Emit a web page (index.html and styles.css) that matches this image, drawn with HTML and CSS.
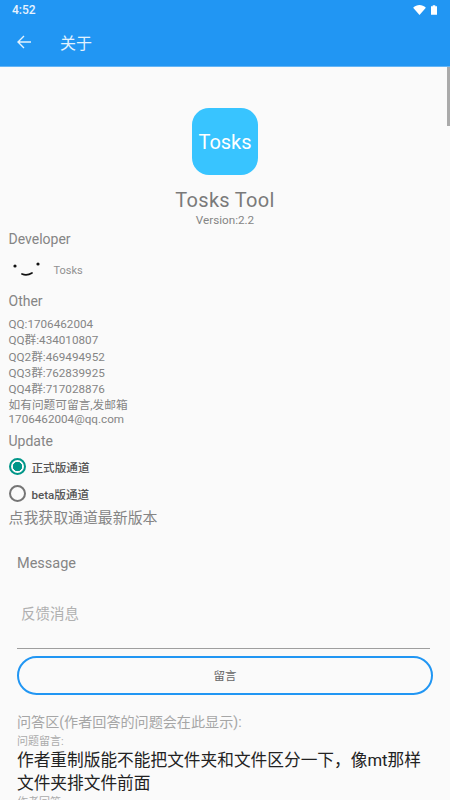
FILE: index.html
```html
<!DOCTYPE html>
<html lang="zh">
<head>
<meta charset="utf-8">
<title>关于</title>
<link rel="stylesheet" href="styles.css">
</head>
<body>
<div class="app">
  <header class="appbar">
    <div class="status">
      <span class="time">4:52</span>
      <span class="status-icons">
        <svg class="wifi" viewBox="0 0 14 11"><path d="M0 3 C4 -1 10 -1 14 3 L7 11 Z" fill="#fff"/></svg>
        <svg class="batt" viewBox="0 0 7 11"><path d="M2 0h3v1h2v10H0V1h2z" fill="#fff"/></svg>
      </span>
    </div>
    <div class="toolbar">
      <svg class="back" viewBox="0 0 16 16"><path d="M15 8H2M8 2 2 8l6 6" fill="none" stroke="#e3f2fd" stroke-width="1.4"/></svg>
      <span class="title">关于</span>
    </div>
  </header>
  <div class="scrollbar"></div>
  <main class="content">
    <section class="hero">
      <div class="logo">Tosks</div>
      <div class="name">Tosks Tool</div>
      <div class="version">Version:2.2</div>
    </section>
    <section class="info">
      <h2 class="label dev-label">Developer</h2>
      <div class="dev">
        <svg class="avatar" viewBox="0 0 32 20">
          <circle cx="4" cy="6" r="1.6" fill="#111"/>
          <circle cx="27" cy="4" r="1.6" fill="#111"/>
          <path d="M11 14 Q16 16 21 13" fill="none" stroke="#111" stroke-width="1.7" stroke-linecap="round"/>
        </svg>
        <span class="dev-name">Tosks</span>
      </div>
      <h2 class="label other">Other</h2>
      <div class="lines">
        <div>QQ:1706462004</div>
        <div>QQ群:434010807</div>
        <div>QQ2群:469494952</div>
        <div>QQ3群:762839925</div>
        <div>QQ4群:717028876</div>
      </div>
      <div class="mail">如有问题可留言,发邮箱<br>1706462004@qq.com</div>
      <h2 class="label update">Update</h2>
      <div class="radios">
        <div class="radio-row"><span class="radio on"></span><span>正式版通道</span></div>
        <div class="radio-row"><span class="radio"></span><span>beta版通道</span></div>
      </div>
      <div class="fetch">点我获取通道最新版本</div>
    </section>
    <section class="form">
      <div class="msg-label">Message</div>
      <div class="input">反馈消息</div>
      <div class="button">留言</div>
      <div class="qa-title">问答区(作者回答的问题会在此显示):</div>
      <div class="small first">问题留言:</div>
      <div class="question">作者重制版能不能把文件夹和文件区分一下，像mt那样文件夹排文件前面</div>
      <div class="small">作者回答:</div>
    </section>
  </main>
</div>
</body>
</html>
```
FILE: styles.css
```css
* { box-sizing: border-box; }
html, body { margin: 0; height: 100%; overflow: hidden; }
body { font-family: Roboto, "Noto Sans CJK SC", sans-serif; background: #fafafa; color: #858585; }
.app { width: 450px; height: 800px; overflow: hidden; position: relative; }
.appbar { height: 67px; background: #2196f3; color: #fff; border-bottom: 1px solid #64b5f6; }
.status { height: 20px; display: flex; justify-content: space-between; align-items: center; padding: 0 13px 0 12px; }
.time { font-size: 12px; font-weight: 500; color: #e8f3fe; }
.status-icons { display: flex; gap: 5px; align-items: center; }
.wifi { width: 13px; height: 10px; }
.batt { width: 6px; height: 10px; }
.toolbar { height: 46px; display: flex; align-items: center; padding-left: 16px; padding-bottom: 2px; gap: 28px; }
.back { width: 16px; height: 16px; }
.title { font-size: 16px; color: #e3f2fd; }
.scrollbar { position: absolute; top: 67px; right: 0; width: 3px; height: 59px; background: #aaa; }
.content { display: flex; flex-direction: column; }
.hero { display: flex; flex-direction: column; align-items: center; padding-top: 41px; }
.logo { width: 66px; height: 67px; border-radius: 17px; background: #38c4ff; color: #fff; font-size: 20px; display: flex; align-items: center; justify-content: center; }
.name { font-size: 20px; line-height: 26px; margin-top: 12px; letter-spacing: .3px; color: #7a7a7a; }
.version { font-size: 11.7px; line-height: 14px; }
.info { padding: 0 8.5px; }
.label { margin: 0; font-size: 14px; font-weight: 400; line-height: 17px; }
.dev-label { margin-top: 4px; }
.dev { display: flex; align-items: center; height: 34px; margin-top: 5px; margin-left: 2px; gap: 11px; }
.avatar { width: 32px; height: 20px; }
.dev-name { font-size: 11px; color: #919191; }
.other { margin-top: 6px; }
.lines { margin-top: 6px; font-size: 11.7px; line-height: 16.3px; }
.mail { font-size: 11.7px; line-height: 14px; margin-top: 1px; }
.update { margin-top: 7px; }
.radios { margin-top: 3px; }
.radio-row { display: flex; align-items: center; gap: 5.5px; height: 27px; font-size: 11.6px; font-weight: 500; color: #555; }
.radio { width: 17px; height: 17px; border-radius: 50%; border: 2px solid #757575; display: block; margin-left: .5px; }
.radio.on { border-color: #009688; background: radial-gradient(circle, #009688 0 4.4px, transparent 5px); }
.fetch { font-size: 14.9px; line-height: 17px; margin-top: 3px; }
.form { padding: 0 17px; }
.msg-label { font-size: 14.5px; line-height: 17px; margin-top: 28px; }
.input { margin-top: 33px; height: 44px; border-bottom: 1px solid #9e9e9e; padding-left: 4px; font-size: 14.5px; line-height: 19px; color: #b0b0b0; margin-right: 3px; }
.button { margin-top: 7px; width: 416px; height: 39px; border: 2.5px solid #2196f3; border-radius: 20px; display: flex; align-items: center; justify-content: center; font-size: 11.5px; color: #666; padding-bottom: 1px; }
.qa-title { margin-top: 19px; font-size: 14.1px; line-height: 17px; color: #a6a6a6; }
.small { font-size: 11px; line-height: 14px; color: #ababab; margin-top: 1px; }
.small.first { margin-top: 4px; }
.question { font-size: 16.7px; line-height: 23px; color: #222; width: 416px; }
```
